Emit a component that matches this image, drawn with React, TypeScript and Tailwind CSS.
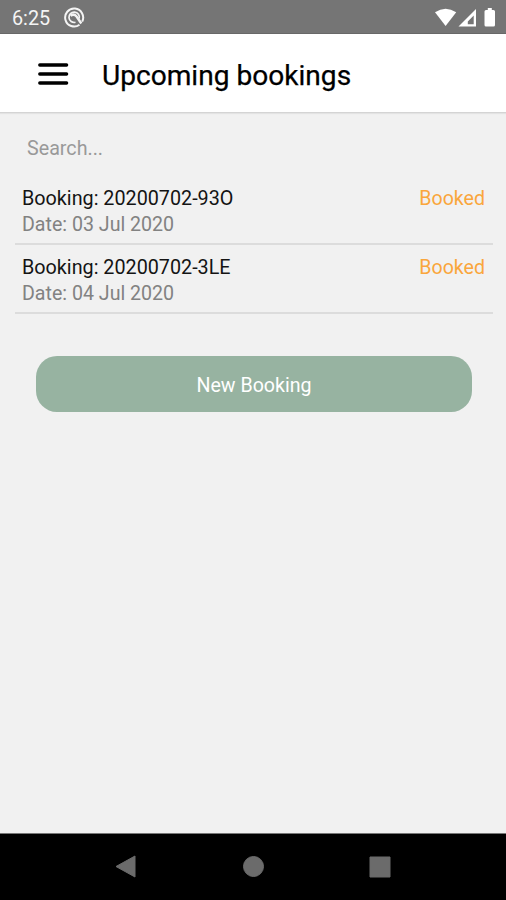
const bookings = [
  { id: "20200702-93O", date: "03 Jul 2020" },
  { id: "20200702-3LE", date: "04 Jul 2020" },
];

function StatusBar() {
  return (
    <div className="flex h-[34px] items-center border-b border-[#686868] bg-[#757575] pl-3 pr-[9px] text-white">
      <span className="mt-[4px] text-[19.8px] leading-[34px] text-[#f4f4f4]">6:25</span>
      <svg className="ml-[14px] mt-[1px]" width="21" height="21" viewBox="0 0 21 21" fill="none" stroke="#f4f4f4">
        <path d="M15.5 17.8A9 9 0 1 1 18.2 14.6" strokeWidth="2" />
        <path d="M11.5 15.3A5.2 5.2 0 1 1 15.2 11.6" strokeWidth="1.7" />
        <path d="M6.5 8.8C8.5 7.2 11 7.6 12.6 9.5L17.3 16.5" strokeWidth="2.4" />
      </svg>
      <svg className="ml-auto mt-[2px]" width="62" height="22" viewBox="0 0 62 22" fill="#fff">
        <path d="M0 5.2Q10.6-1.8 21.2 5.2L10.6 19Z" />
        <path fillRule="evenodd" d="M41 2V19.5H23.5ZM38.7 8.5L32.8 14.5V17.2H38.7Z" />
        <path d="M52.8 1H56.8V2.9H58.5Q60 2.9 60 4.4V18Q60 19.5 58.5 19.5H51Q49.5 19.5 49.5 18V4.4Q49.5 2.9 51 2.9H52.8Z" />
      </svg>
    </div>
  );
}

function Header() {
  return (
    <header className="flex h-[79px] items-center border-b border-[#d4d4d4] bg-white pl-[38px] shadow-[0_1px_1px_#e3e3e3]">
      <svg className="mt-[2px]" width="31" height="24" viewBox="0 0 31 24" stroke="#000" strokeWidth="3.4" strokeLinecap="round">
        <path d="M1.8 3H28.6M1.8 12H28.6M1.8 21H28.6" />
      </svg>
      <h1 className="ml-[33px] mt-[6px] text-[28.1px] leading-8 text-black [-webkit-text-stroke:0.25px_#000]">Upcoming bookings</h1>
    </header>
  );
}

export default function App() {
  return (
    <div className="flex h-[900px] w-[506px] flex-col overflow-hidden bg-[#f1f1f1] font-[Roboto,sans-serif]">
      <StatusBar />
      <Header />
      <main className="flex-1 px-[15px]">
        <input
          className="mt-[20px] block h-[30px] w-full bg-transparent px-3 text-[19.7px] text-[#777] outline-none placeholder:text-[#999]"
          placeholder="Search..."
        />
        <ul className="mt-[13px] w-[478px]">
          {bookings.map((b) => (
            <li key={b.id} className="flex h-[69px] justify-between border-b-2 border-[#dcdcdc] pl-[7px] pr-2 pt-[10px]">
              <div className="text-[19.75px] leading-[26px]">
                <p className="text-[#141414]">Booking: {b.id}</p>
                <p className="text-[19.6px] text-[#828282]">Date: {b.date}</p>
              </div>
              <span className="text-[19.6px] leading-[26px] text-[#faa63c]">Booked</span>
            </li>
          ))}
        </ul>
        <button className="ml-[21px] mt-[42px] block h-[56px] w-[436px] rounded-[21px] bg-[#97b3a1] pt-[3px] text-[19.6px] text-white">
          New Booking
        </button>
      </main>
      <nav className="h-[67px] border-t border-[#777] bg-black">
        <svg width="506" height="66" viewBox="0 0 506 66" fill="#6b6b6b" stroke="#6b6b6b" strokeLinejoin="round">
          <path d="M116 32.5L135 22V43Z" />
          <circle cx="253.5" cy="32.5" r="10" />
          <path d="M370 23H390V43H370Z" />
        </svg>
      </nav>
    </div>
  );
}
